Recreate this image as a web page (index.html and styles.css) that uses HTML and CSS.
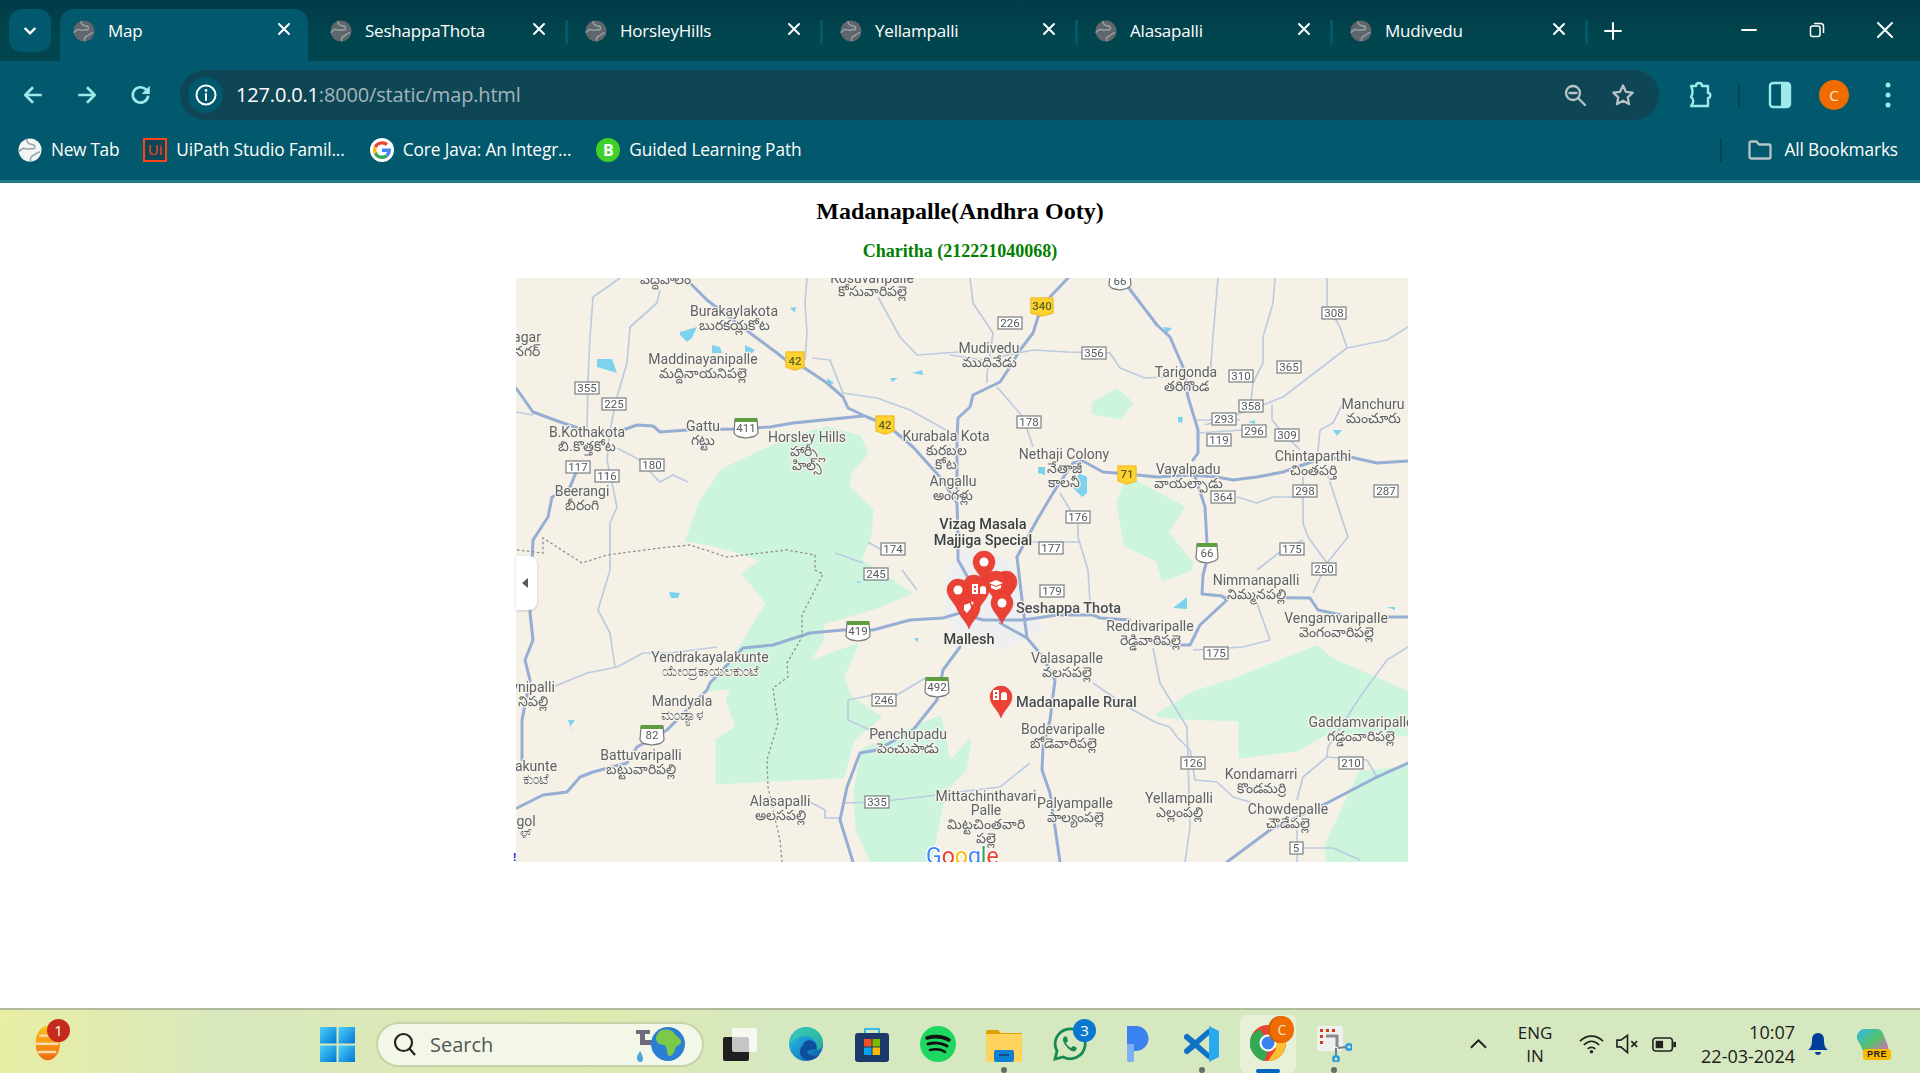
FILE: index.html
```html
<!DOCTYPE html>
<html lang="en">
<head>
<meta charset="utf-8">
<title>Map</title>
<link rel="stylesheet" href="styles.css">
</head>
<body>
<svg class="defs" aria-hidden="true">
  <symbol id="globe" viewBox="0 0 24 24"><circle cx="12" cy="12" r="11.5" fill="currentColor"/><path class="globe-land" d="M9 1c-1 3 1 4 3 5s5 0 5 3-4 1-6 2-5-2-7 0-3 2-3 3M13 23c-2-3 1-5 3-6s3-3 6-3" /></symbol>
  <symbol id="close" viewBox="0 0 14 14"><path class="stroke-white" d="M2 2l10 10M12 2L2 12"/></symbol>
  <symbol id="pin" viewBox="-12 -12 24 34" overflow="visible"><path d="M0 21C-2.500 13-11 8-11 0A11 11 0 1 1 11 0C11 8 2.500 13 0 21Z"/></symbol>
  <linearGradient id="win" x1="0" y1="0" x2="1" y2="1"><stop offset="0" stop-color="#4fd0fa"/><stop offset="1" stop-color="#0078d4"/></linearGradient>
  <linearGradient id="wx" x1="0" y1="0" x2="0" y2="1"><stop offset="0" stop-color="#fcc419"/><stop offset="1" stop-color="#f06a0f"/></linearGradient>
  <linearGradient id="edge" x1="0" y1="0" x2="1" y2="1"><stop offset="0" stop-color="#2fc5e8"/><stop offset=".6" stop-color="#1789c9"/><stop offset="1" stop-color="#0c4f9e"/></linearGradient>
  <linearGradient id="cop" x1="0" y1="0" x2="1" y2="1"><stop offset="0" stop-color="#2fb5f0"/><stop offset=".5" stop-color="#54c26a"/><stop offset="1" stop-color="#e45fc8"/></linearGradient>
</svg>

<header class="chrome">
  <div class="tabstrip">
    <button class="tab-menu"><svg class="ico12" viewBox="0 0 12 12"><path class="stroke-white" d="M2 4l4 4 4-4"/></svg></button>
    <div class="tabs">
      <div class="tab active"><svg class="fav"><use href="#globe"/></svg><span class="tab-title">Map</span><svg class="tab-x"><use href="#close"/></svg></div>
      <div class="tab sep"><svg class="fav"><use href="#globe"/></svg><span class="tab-title">SeshappaThota</span><svg class="tab-x"><use href="#close"/></svg></div>
      <div class="tab sep"><svg class="fav"><use href="#globe"/></svg><span class="tab-title">HorsleyHills</span><svg class="tab-x"><use href="#close"/></svg></div>
      <div class="tab sep"><svg class="fav"><use href="#globe"/></svg><span class="tab-title">Yellampalli</span><svg class="tab-x"><use href="#close"/></svg></div>
      <div class="tab sep"><svg class="fav"><use href="#globe"/></svg><span class="tab-title">Alasapalli</span><svg class="tab-x"><use href="#close"/></svg></div>
      <div class="tab sep"><svg class="fav"><use href="#globe"/></svg><span class="tab-title">Mudivedu</span><svg class="tab-x"><use href="#close"/></svg></div>
    </div>
    <svg class="plus" viewBox="0 0 18 18"><path class="stroke-white" d="M9 1v16M1 9h16"/></svg>
    <div class="winctl">
      <div class="winbtn"><svg viewBox="0 0 16 16"><path class="stroke-white" d="M1 8h14"/></svg></div>
      <div class="winbtn"><svg viewBox="0 0 16 16"><rect class="line-white" x="1.500" y="4" width="9.500" height="10.500" rx="2"/><path class="line-white" d="M5 1.500h6.500a3 3 0 0 1 3 3V11"/></svg></div>
      <div class="winbtn"><svg viewBox="0 0 16 16"><path class="stroke-white" d="M1 1l14 14M15 1L1 15"/></svg></div>
    </div>
  </div>

  <div class="toolbar">
    <div class="navbtn"><svg class="ico20" viewBox="0 0 20 20"><path class="stroke-teal" d="M18 10H3M10 3l-7 7 7 7"/></svg></div>
    <div class="navbtn"><svg class="ico20" viewBox="0 0 20 20"><path class="stroke-teal" d="M2 10h15M10 3l7 7-7 7"/></svg></div>
    <div class="navbtn"><svg class="ico20" viewBox="0 0 20 20"><path class="stroke-teal" d="M16.500 10.500a7 7 0 1 1-2-5.500l2 2"/><path class="fill-teal" d="M18 1.500V9h-7.500z"/></svg></div>
    <div class="omnibox">
      <div class="info"><svg class="ico22" viewBox="0 0 22 22"><circle class="line-white2" cx="11" cy="11" r="9.500"/><path class="stroke-white" d="M11 10v6"/><circle class="dot-white" cx="11" cy="6.500" r="1.400"/></svg></div>
      <div class="url"><span class="url-host">127.0.0.1</span><span class="url-path">:8000/static/map.html</span></div>
      <svg class="omni-zoom" viewBox="0 0 24 24"><circle class="stroke-grey" cx="10" cy="10" r="7"/><path class="stroke-grey" d="M6.500 10h7M15.500 15.500L22 22"/></svg>
      <svg class="omni-star" viewBox="0 0 24 24"><path class="stroke-grey" d="M12 2.500l2.900 6.300 6.800.8-5 4.700 1.300 6.800L12 17.700 6 21.100l1.300-6.800-5-4.700 6.800-.8z"/></svg>
    </div>
    <svg class="tool-ext" viewBox="0 0 24 28"><path class="stroke-teal" d="M3 5h5c0-4 6-4 6 0h6v7c3-1 3 5 0 5v8H3c3-3 3-7 0-9 2-3 2-7 0-11z"/></svg>
    <div class="tool-sep"></div>
    <svg class="tool-panel" viewBox="0 0 24 28"><rect class="stroke-teal" x="2" y="2" width="20" height="24" rx="3"/><rect class="fill-teal" x="13" y="2" width="9" height="24" rx="2"/></svg>
    <div class="avatar">C</div>
    <svg class="tool-dots" viewBox="0 0 6 28"><circle class="fill-teal" cx="3" cy="4" r="2.500"/><circle class="fill-teal" cx="3" cy="14" r="2.500"/><circle class="fill-teal" cx="3" cy="24" r="2.500"/></svg>
  </div>

  <div class="bookmarks">
    <div class="bm bm-newtab"><svg class="bm-ico globe-w"><use href="#globe"/></svg><span>New Tab</span></div>
    <div class="bm bm-ui"><span class="ui-logo">Ui</span><span>UiPath Studio Famil...</span></div>
    <div class="bm bm-g"><svg class="bm-ico" viewBox="0 0 24 24"><circle class="g-bg" cx="12" cy="12" r="12"/><path class="g-r" d="M12 6.500a5.500 5.500 0 0 1 3.700 1.400l2.300-2.300A9 9 0 0 0 4 8l2.700 2.100A5.500 5.500 0 0 1 12 6.500z"/><path class="g-y" d="M6.700 10.100L4 8a9 9 0 0 0 0 8l2.700-2.100a5.500 5.500 0 0 1 0-3.800z"/><path class="g-g" d="M12 17.500a5.500 5.500 0 0 1-5.300-3.600L4 16a9 9 0 0 0 14 2.700l-2.600-2a5.500 5.500 0 0 1-3.400.8z"/><path class="g-b" d="M21 12.400c0-.6 0-1.200-.2-1.900H12v3.600h5a4.300 4.300 0 0 1-1.600 2.600l2.600 2a9 9 0 0 0 3-6.300z"/></svg><span>Core Java: An Integr...</span></div>
    <div class="bm bm-b"><span class="b-logo">B</span><span>Guided Learning Path</span></div>
    <div class="bm-sep"></div>
    <div class="bm bm-all"><svg class="bm-folder" viewBox="0 0 24 20"><path class="stroke-grey" d="M1.500 17V3a1.500 1.500 0 0 1 1.500-1.500h5.500l2.500 3h10a1.500 1.500 0 0 1 1.500 1.500v11a1.500 1.500 0 0 1-1.500 1.500H3A1.500 1.500 0 0 1 1.500 17z"/></svg><span>All Bookmarks</span></div>
  </div>
</header>

<main class="page">
  <h2 class="title">Madanapalle(Andhra Ooty)</h2>
  <h3 class="subtitle">Charitha (212221040068)</h3>
  <div class="map">
    <svg class="map-svg" viewBox="516 278 892 584" width="892" height="584">
      <rect class="land" x="516" y="278" width="892" height="584"/>
      <g class="forest">
        <polygon points="722,470 743,460 793,437 827,428 860,437 867,453 850,473 848,487 872,510 870,537 860,560 910,593 877,607 823,623 822,640 808,663 857,645 843,677 850,697 880,717 853,740 843,777 770,780 717,783 717,740 737,727 727,700 733,687 710,690 743,643 767,603 743,573 763,560 723,547 687,540 700,503"/>
        <polygon points="863,750 940,717 950,763 970,740 965,770 945,790 930,862 872,862 857,830 855,790"/>
        <polygon points="1157,715 1193,693 1233,680 1283,660 1317,647 1333,660 1363,673 1408,693 1408,735 1327,733 1297,750 1240,757 1240,720 1180,718"/>
        <polygon points="1327,843 1360,773 1408,767 1408,862 1327,862"/>
        <polygon points="1118,503 1127,477 1183,507 1167,533 1192,563 1190,570 1163,580 1157,560 1125,545"/>
        <polygon points="1093,403 1117,390 1132,403 1120,418 1093,413"/>
      </g>
      <polygon class="town" points="945,575 965,545 1010,560 1030,610 1045,630 1000,650 960,640 945,615"/>
      <g class="water">
        <polygon points="680,332 697,327 692,338 687,342 680,335"/><polygon points="597,359 612,359 617,373 597,367"/><polygon points="712,345 720,347 722,353 712,353"/><polygon points="745,345 755,350 752,353 745,352"/><polygon points="790,308 796,307 795,313"/><polygon points="912,373 922,370 923,375"/><polygon points="890,378 898,378 892,382"/><polygon points="827,378 834,383 828,386"/><polygon points="1163,327 1172,328 1167,333"/><polygon points="1178,417 1183,417 1182,423 1178,422"/><polygon points="1038,467 1045,467 1045,475 1038,473"/><polygon points="1078,473 1087,477 1087,493 1082,497 1072,487 1078,482"/><polygon points="1333,430 1342,430 1337,436"/><polygon points="1248,422 1255,420 1255,424"/><polygon points="1173,608 1187,597 1187,609"/><polygon points="1387,607 1395,607 1395,610"/><polygon points="669,592 680,593 678,598 671,598"/><polygon points="568,720 575,720 570,727 573,734"/><polygon points="914,638 919,638 917,642"/><polygon points="856,581 863,582 858,583"/>
      </g>
      <g class="road-minor">
        <polyline points="620,278 593,297 590,337 588,380 587,430"/>
        <polyline points="660,290 657,303 630,327 627,363 617,397 610,430 607,460 617,507 610,523 610,570 598,610 610,633 615,667"/>
        <polyline points="553,687 587,673 617,667 643,653 670,653 717,647"/>
        <polyline points="970,278 973,303 993,333 987,373 987,383"/>
        <polyline points="950,355 983,360 1033,350 1067,352 1110,353 1120,368 1145,378 1163,377"/>
        <polyline points="1218,278 1213,337 1210,377"/>
        <polyline points="1275,278 1273,303 1263,337 1263,363 1253,383 1250,410"/>
        <polyline points="1327,278 1327,305 1340,327 1347,348 1283,397 1250,410 1205,425"/>
        <polyline points="1347,348 1387,340 1408,327"/>
        <polyline points="1272,405 1272,420 1283,433 1300,450"/>
        <polyline points="1343,403 1333,423 1320,430 1317,460"/>
        <polyline points="1303,477 1303,523 1308,537 1327,563"/>
        <polyline points="1327,473 1348,537 1327,563 1313,593"/>
        <polyline points="1060,493 1078,523 1078,537 1088,570 1090,603"/>
        <polyline points="1022,542 1080,542"/>
        <polyline points="997,387 1023,417 1033,447"/>
        <polyline points="1197,420 1240,420"/>
        <polyline points="1198,433 1243,430"/>
        <polyline points="1237,497 1257,503 1273,497 1303,497"/>
        <polyline points="1257,570 1280,552 1303,540"/>
        <polyline points="516,412 533,415"/>
        <polyline points="617,448 640,460 653,475 660,482 673,475 688,482"/>
        <polyline points="1093,683 1103,690 1133,710 1157,723 1170,727 1177,737 1190,750 1195,780 1217,782 1233,797 1250,802"/>
        <polyline points="1153,648 1160,683 1187,727 1190,827 1185,862"/>
        <polyline points="1257,603 1270,640 1243,647 1193,650"/>
        <polyline points="1297,800 1303,777 1327,757 1367,760 1377,777"/>
        <polyline points="1327,757 1328,747 1360,697 1387,660 1408,647"/>
        <polyline points="1297,830 1297,862"/>
        <polyline points="1300,848 1333,848 1360,860"/>
        <polyline points="950,793 1000,787 1030,763"/>
        <polyline points="843,803 877,802 937,795"/>
        <polyline points="810,802 825,810 825,818 840,818"/>
        <polyline points="848,700 848,720 877,733"/>
        <polyline points="848,700 873,695 897,695 927,677"/>
        <polyline points="902,570 917,590"/>
        <polyline points="835,553 863,563"/>
        <polyline points="868,542 887,553"/>
        <polyline points="807,278 805,303 807,333 805,360"/>
        <polyline points="812,358 830,360 835,373 843,393 877,398 910,410 955,435"/>
        <polyline points="878,297 900,337 917,355 958,352"/>
      </g>
      <g class="road-major">
        <polyline points="690,283 707,300 750,333 777,353 787,361 803,367 827,383 843,397 848,408 867,417 887,425 913,447 940,477 957,503 958,537 958,560 975,590"/>
        <polyline points="516,388 533,412 563,423 590,432 623,430 637,425 653,426 660,432 687,430 733,429 770,427 793,423 863,416"/>
        <polyline points="577,470 570,487 552,497 548,517 533,540 532,563 530,613 533,640 525,660 530,680 522,720 522,760"/>
        <polyline points="1068,278 1050,297 1038,317 1033,333 1020,350 1008,370 1000,382 973,395 970,407 958,418 957,437 957,500"/>
        <polyline points="1017,557 1037,520 1053,493 1073,463 1083,461 1103,472 1127,474 1157,477 1190,475 1217,477 1233,480 1257,477 1283,472 1317,460 1350,457 1377,463 1408,461"/>
        <polyline points="1128,287 1157,325 1170,337 1183,367 1188,397 1198,430 1198,453 1193,460"/>
        <polyline points="1193,470 1205,507 1207,543 1207,560 1203,575 1202,594 1222,596 1227,600 1200,625 1190,645 1170,645 1152,642"/>
        <polyline points="710,683 743,648 773,645 810,633 843,630 873,630 910,620 943,618 960,613 983,620 1023,620 1057,615 1093,615 1100,618 1130,620"/>
        <polyline points="710,683 707,690 667,730 637,747 627,763 593,772 580,777 567,792 543,795 517,808"/>
        <polyline points="1000,623 1027,638 1043,657 1055,680 1050,720 1043,747 1042,770 1050,793 1060,862"/>
        <polyline points="960,647 943,670 937,700 913,730 877,750 860,753 847,787 840,820 853,862"/>
        <polyline points="1408,763 1377,777 1327,803 1270,830 1227,862"/>
        <polyline points="1227,597 1310,598 1318,610 1350,617 1407,617"/>
        <polyline points="1017,557 1022,600 1027,638"/>
      </g>
      <polyline class="border" points="517,550 543,553 543,538 582,563 607,555 660,548 690,545 727,557 787,550 815,555 815,570 823,574 802,615 802,637 787,663 788,677 773,688 778,723 767,760 768,787 780,840 782,862"/>

      <g class="lbl">
        <text x="665" y="284">పెద్దపాలెం</text><text x="872" y="283">Kosuvaripalle</text><text x="872" y="296">కోసువారిపల్లె</text>
        <text x="734" y="316">Burakaylakota</text><text x="734" y="330">బురకయ్లకోట</text>
        <text x="703" y="364">Maddinayanipalle</text><text x="703" y="378">మద్దినాయనిపల్లె</text>
        <text x="587" y="437">B.Kothakota</text><text x="587" y="451">బి.కొత్తకోట</text>
        <text x="703" y="431">Gattu</text><text x="703" y="445">గట్టు</text>
        <text x="807" y="442">Horsley Hills</text><text x="807" y="456">హార్స్లీ</text><text x="807" y="470">హిల్స్</text>
        <text x="582" y="496">Beerangi</text><text x="582" y="510">బీరంగి</text>
        <text x="946" y="441">Kurabala Kota</text><text x="946" y="455">కురబల</text><text x="946" y="469">కోట</text>
        <text x="953" y="486">Angallu</text><text x="953" y="500">అంగళ్లు</text>
        <text x="989" y="353">Mudivedu</text><text x="989" y="367">ముదివేడు</text>
        <text x="1186" y="377">Tarigonda</text><text x="1186" y="391">తరిగొండ</text>
        <text x="1064" y="459">Nethaji Colony</text><text x="1064" y="473">నేతాజీ</text><text x="1064" y="487">కాలనీ</text>
        <text x="1188" y="474">Vayalpadu</text><text x="1188" y="488">వాయల్పాడు</text>
        <text x="1313" y="461">Chintaparthi</text><text x="1313" y="475">చింతపర్తి</text>
        <text x="1373" y="409">Manchuru</text><text x="1373" y="423">మంచూరు</text>
        <text x="1256" y="585">Nimmanapalli</text><text x="1256" y="599">నిమ్మనపల్లి</text>
        <text x="1336" y="623">Vengamvaripalle</text><text x="1336" y="637">వెంగంవారిపల్లె</text>
        <text x="1150" y="631">Reddivaripalle</text><text x="1150" y="645">రెడ్డివారిపల్లె</text>
        <text x="1067" y="663">Valasapalle</text><text x="1067" y="677">వలసపల్లె</text>
        <text x="1063" y="734">Bodevaripalle</text><text x="1063" y="748">బోడెవారిపల్లె</text>
        <text x="1361" y="727">Gaddamvaripalle</text><text x="1361" y="741">గడ్డంవారిపల్లె</text>
        <text x="1261" y="779">Kondamarri</text><text x="1261" y="793">కొండమర్రి</text>
        <text x="1288" y="814">Chowdepalle</text><text x="1288" y="828">చౌడేపల్లె</text>
        <text x="1179" y="803">Yellampalli</text><text x="1179" y="817">ఎల్లంపల్లి</text>
        <text x="1075" y="808">Palyampalle</text><text x="1075" y="822">పాల్యంపల్లె</text>
        <text x="986" y="801">Mittachinthavari</text><text x="986" y="815">Palle</text><text x="986" y="829">మిట్టచింతవారి</text><text x="986" y="843">పల్లె</text>
        <text x="780" y="806">Alasapalli</text><text x="780" y="820">అలసపల్లి</text>
        <text x="908" y="739">Penchupadu</text><text x="908" y="753">పెంచుపాడు</text>
        <text x="641" y="760">Battuvaripalli</text><text x="641" y="774">బట్టువారిపల్లి</text>
        <text x="682" y="706">Mandyala</text><text x="682" y="720">ಮಂಡ್ಯಾಳ</text>
        <text x="710" y="662">Yendrakayalakunte</text><text x="710" y="676">ಯೇಂದ್ರಕಾಯಲಕುಂಟೆ</text>
        <text x="527" y="342">agar</text><text x="527" y="356">నగర్</text>
        <text x="533" y="692">vnipalli</text><text x="533" y="706">నిపల్లి</text>
        <text x="536" y="771">akunte</text><text x="536" y="784">ಕುಂಟೆ</text>
        <text x="526" y="826">gol</text><text x="526" y="838">ಳ್</text>
      </g>
      <g class="lbl lbl-strong">
        <text x="983" y="529">Vizag Masala</text><text x="983" y="545">Majjiga Special</text>
        <text x="969" y="644">Mallesh</text>
      </g>
      <g class="lbl lbl-start lbl-strong2">
        <text x="1016" y="613">Seshappa Thota</text>
        <text x="1016" y="707">Madanapalle Rural</text>
      </g>

      <g class="sh">
        <rect x="575" y="382" width="24" height="12"/><text x="587" y="392">355</text>
        <rect x="602" y="398" width="24" height="12"/><text x="614" y="408">225</text>
        <rect x="566" y="461" width="24" height="12"/><text x="578" y="471">117</text>
        <rect x="595" y="470" width="24" height="12"/><text x="607" y="480">116</text>
        <rect x="640" y="459" width="24" height="12"/><text x="652" y="469">180</text>
        <rect x="881" y="543" width="24" height="12"/><text x="893" y="553">174</text>
        <rect x="998" y="317" width="24" height="12"/><text x="1010" y="327">226</text>
        <rect x="1082" y="347" width="24" height="12"/><text x="1094" y="357">356</text>
        <rect x="1017" y="416" width="24" height="12"/><text x="1029" y="426">178</text>
        <rect x="1066" y="511" width="24" height="12"/><text x="1078" y="521">176</text>
        <rect x="1039" y="542" width="24" height="12"/><text x="1051" y="552">177</text>
        <rect x="1322" y="307" width="24" height="12"/><text x="1334" y="317">308</text>
        <rect x="1229" y="370" width="24" height="12"/><text x="1241" y="380">310</text>
        <rect x="1277" y="361" width="24" height="12"/><text x="1289" y="371">365</text>
        <rect x="1239" y="400" width="24" height="12"/><text x="1251" y="410">358</text>
        <rect x="1212" y="413" width="24" height="12"/><text x="1224" y="423">293</text>
        <rect x="1242" y="425" width="24" height="12"/><text x="1254" y="435">296</text>
        <rect x="1275" y="429" width="24" height="12"/><text x="1287" y="439">309</text>
        <rect x="1207" y="434" width="24" height="12"/><text x="1219" y="444">119</text>
        <rect x="1211" y="491" width="24" height="12"/><text x="1223" y="501">364</text>
        <rect x="1293" y="485" width="24" height="12"/><text x="1305" y="495">298</text>
        <rect x="1374" y="485" width="24" height="12"/><text x="1386" y="495">287</text>
        <rect x="1280" y="543" width="24" height="12"/><text x="1292" y="553">175</text>
        <rect x="1312" y="563" width="24" height="12"/><text x="1324" y="573">250</text>
        <rect x="1040" y="585" width="24" height="12"/><text x="1052" y="595">179</text>
        <rect x="1204" y="647" width="24" height="12"/><text x="1216" y="657">175</text>
        <rect x="1181" y="757" width="24" height="12"/><text x="1193" y="767">126</text>
        <rect x="1339" y="757" width="24" height="12"/><text x="1351" y="767">210</text>
        <rect x="1290" y="842" width="13" height="12"/><text x="1296" y="852">5</text>
        <rect x="864" y="568" width="24" height="12"/><text x="876" y="578">245</text>
        <rect x="872" y="694" width="24" height="12"/><text x="884" y="704">246</text>
        <rect x="865" y="796" width="24" height="12"/><text x="877" y="806">335</text>
      </g>
      <g class="sh-y">
        <path d="M786 352h18v15l-9 3-9-3z"/><text x="795" y="365">42</text>
        <path d="M876 416h18v15l-9 3-9-3z"/><text x="885" y="429">42</text>
        <path d="M1031 298h22v15l-11 3-11-3z"/><text x="1042" y="310">340</text>
        <path d="M1118 466h18v15l-9 3-9-3z"/><text x="1127" y="478">71</text>
      </g>
      <g class="sh-us">
        <path class="us-b" d="M735 419h22l1 14c-2 4-6 4-12 5-6-1-10-1-12-5z"/><rect class="us-g" x="735" y="418" width="22" height="4"/><text x="746" y="432">411</text>
        <path class="us-b" d="M847 622h22l1 14c-2 4-6 4-12 5-6-1-10-1-12-5z"/><rect class="us-g" x="847" y="621" width="22" height="4"/><text x="858" y="635">419</text>
        <path class="us-b" d="M926 678h22l1 14c-2 4-6 4-12 5-6-1-10-1-12-5z"/><rect class="us-g" x="926" y="677" width="22" height="4"/><text x="937" y="691">492</text>
        <path class="us-b" d="M641 726h22l1 14c-2 4-6 4-12 5-6-1-10-1-12-5z"/><rect class="us-g" x="641" y="725" width="22" height="4"/><text x="652" y="739">82</text>
        <path class="us-b" d="M1197 544h20l1 14c-2 4-6 4-11 5-6-1-9-1-11-5z"/><rect class="us-g" x="1197" y="543" width="20" height="4"/><text x="1207" y="557">66</text>
        <path class="us-b" d="M1110 276h20l1 9c-2 4-6 4-11 5-6-1-9-1-11-5z"/><text x="1120" y="285">66</text>
      </g>

      <g class="pins">
        <use href="#pin" x="994" y="570" width="24" height="34"/>
        <use href="#pin" x="990" y="572" width="24" height="34"/>
        <use href="#pin" x="972" y="550" width="24" height="34"/>
        <use href="#pin" x="984" y="570" width="24" height="34"/>
        <use href="#pin" x="946" y="578" width="24" height="34"/>
        <use href="#pin" x="962" y="574" width="24" height="34"/>
        <use href="#pin" x="966" y="578" width="24" height="34"/>
        <use href="#pin" x="957" y="596" width="24" height="34"/>
        <use href="#pin" x="990" y="591" width="24" height="34"/>
        <use href="#pin" x="989" y="685" width="24" height="34"/>
        <circle class="pin-dot" cx="984" cy="562" r="4.500"/>
        <circle class="pin-dot" cx="958" cy="590" r="4.500"/>
        <circle class="pin-dot" cx="1002" cy="603" r="4.500"/>
        <path class="pin-glyph" d="M989 583l7-3 7 3-7 3zM991 585v3l5 2 5-2v-3l-5 2z"/>
        <path class="pin-glyph" fill-rule="evenodd" d="M972 584h6v10h-6zM974 586v2h2v-2zM974 590v2h2v-2zM980 589a3 3 0 0 1 6 0v5h-6zM993 690h6v10h-6zM995 692v2h2v-2zM995 696v2h2v-2zM1001 695a3 3 0 0 1 6 0v5h-6z"/>
        <path class="pin-glyph" d="M964 605l6-2 1 5-4 5-3-3zM971 601l3 2-2 2z"/>
      </g>

      <text class="glogo" x="926" y="864"><tspan class="gb">G</tspan><tspan class="gr">o</tspan><tspan class="gy">o</tspan><tspan class="gb">g</tspan><tspan class="gg">l</tspan><tspan class="gr">e</tspan></text>
    </svg>
    <div class="map-toggle"><span class="map-arrow"></span></div>
    <a class="map-mark">!</a>
  </div>
</main>

<footer class="taskbar">
  <div class="tb-weather">
    <svg class="wx-ico" viewBox="0 0 32 44"><ellipse cx="17" cy="22" rx="15" ry="21" fill="url(#wx)"/><path class="wx-lines" d="M8 13h14M1 23h28M6 33h20"/></svg>
    <span class="wx-badge">1</span>
  </div>
  <div class="tb-slot tb-win"><svg class="win-ico" viewBox="0 0 35 35"><rect x="0" y="0" width="16.500" height="16.500" fill="url(#win)"/><rect x="18.500" y="0" width="16.500" height="16.500" fill="url(#win)"/><rect x="0" y="18.500" width="16.500" height="16.500" fill="url(#win)"/><rect x="18.500" y="18.500" width="16.500" height="16.500" fill="url(#win)"/></svg></div>
  <div class="tb-search">
    <svg class="s-ico" viewBox="0 0 24 24"><circle cx="10.500" cy="10.500" r="8.500"/><path d="M16 16l6 7"/></svg>
    <span class="s-text">Search</span>
    <svg class="s-art" viewBox="0 0 60 40"><path class="tap" d="M6 6h14v4h-5v6h14c4 0 6 3 6 8h-7c0-2-1-3-3-3H10V10H6z"/><path class="drop" d="M10 27c-3 5-4 7-2 10 2 2 5 1 5-2 0-2-1-5-3-8z"/><circle class="earth" cx="38" cy="20" r="17"/><path class="land2" d="M30 7c6-3 12-1 14 2 2 4 8 5 7 10-2 3-5 2-6 6-1 5-5 9-7 6-2-4 0-8-4-10-5 0-8-3-8-7 0-3 2-5 4-7z"/></svg>
  </div>
  <div class="tb-slot"><svg class="tb-ico" viewBox="0 0 36 36"><rect class="tv-b" x="1" y="11" width="26" height="24" rx="2"/><rect class="tv-w" x="10" y="2" width="25" height="24" rx="2"/></svg></div>
  <div class="tb-slot"><svg class="tb-ico" viewBox="0 0 36 36"><circle cx="18" cy="18" r="17" fill="url(#edge)"/><path class="edge-w" d="M15 19c1-5 7-6 11-3 3 2 3 5 2 7-3 1-7 0-9 3 3 4 9 6 13 2-2 3-6 6-11 6-6 0-9-4-9-8 0-3 1-5 3-7z"/><path class="edge-g" d="M18 1c9 0 17 7 17 15 0 5-3 8-6 8 1-8-5-14-12-14-6 0-11 3-15 9C3 9 9 1 18 1z"/></svg></div>
  <div class="tb-slot"><svg class="tb-ico" viewBox="0 0 36 36"><path class="bag-h" d="M11 8V3h14v5"/><rect class="bag" x="1" y="7" width="34" height="29" rx="3"/><rect class="ms-r" x="10" y="13" width="7.500" height="7.500"/><rect class="ms-g" x="18.500" y="13" width="7.500" height="7.500"/><rect class="ms-b" x="10" y="21.500" width="7.500" height="7.500"/><rect class="ms-y" x="18.500" y="21.500" width="7.500" height="7.500"/></svg></div>
  <div class="tb-slot"><svg class="tb-ico" viewBox="0 0 36 36"><circle class="sp" cx="18" cy="18" r="18"/><path class="sp-a a1" d="M7 12c7-2 15-2 22 2"/><path class="sp-a a2" d="M8 18c6-2 14-1 19 2"/><path class="sp-a a3" d="M10 24c5-1 11-1 15 2"/></svg></div>
  <div class="tb-slot tb-run"><svg class="tb-ico" viewBox="0 0 36 36"><path class="fold-b" d="M0 6a2 2 0 0 1 2-2h10l3 3h21v6H0z"/><path class="fold-f" d="M0 8h36v28H0z"/><rect class="fold-blue" x="8" y="24" width="20" height="12" rx="2"/><path class="fold-d" d="M13 29h10"/></svg></div>
  <div class="tb-slot"><svg class="tb-ico" viewBox="0 0 36 36"><path class="wa" d="M3 33l2-8A15 15 0 1 1 11 31z"/><path class="wa-h" d="M12 11c-2 2-1 5 2 9s6 6 9 5c2-1 2-3 1-4l-3-1-2 2c-2-1-4-3-5-5l2-2-1-4c-1-1-2-1-3 0z"/></svg><span class="wa-badge">3</span></div>
  <div class="tb-slot"><svg class="tb-ico" viewBox="0 0 36 36"><path class="p1" d="M9 0h9a12 12 0 0 1 0 25h-2v8a3 3 0 0 1-3 3h-1a3 3 0 0 1-3-3z"/><path class="p2" d="M9 18h7v15a3 3 0 0 1-3 3h-1a3 3 0 0 1-3-3z"/></svg></div>
  <div class="tb-slot tb-run"><svg class="tb-ico" viewBox="0 0 36 36"><path class="vs-arm" d="M3 11l22 19M3 25L25 6"/><path class="vs-panel" d="M25 0l10 5v26l-10 5z"/><path class="vs-notch" d="M25 9l-10 9 10 9z"/></svg></div>
  <div class="tb-slot tb-active"><svg class="tb-ico" viewBox="0 0 36 36"><circle class="cr-r" cx="18" cy="18" r="18"/><path class="cr-g" d="M18 18L2.400 27A18 18 0 0 1 2.400 9L10 4z"/><path class="cr-g" d="M2 26L10 18l8 8-4 10A18 18 0 0 1 2 26z"/><path class="cr-y" d="M18 36A18 18 0 0 0 34 10H18l8 14z"/><circle class="cr-w" cx="18" cy="18" r="8.500"/><circle class="cr-b" cx="18" cy="18" r="6.500"/></svg><span class="cr-badge">C</span></div>
  <div class="tb-slot tb-run"><svg class="tb-ico" viewBox="0 0 36 36"><rect class="sn-bg" x="1" y="0" width="26" height="25" rx="3"/><path class="sn-red" d="M4 3h3v3H4zM10 3h3v3h-3zM16 3h3v3h-3zM4 9h3v3H4zM4 15h3v3H4z"/><path class="sn-grey" d="M10 10h11v11"/><path class="sn-cut" d="M20 22l0 7M22 22l8-1"/><circle class="sn-c" cx="33" cy="21" r="2.800"/><circle class="sn-c" cx="20" cy="33" r="2.800"/></svg></div>
  <div class="tray">
    <svg class="tr-chev" viewBox="0 0 18 10"><path d="M1 9l8-8 8 8"/></svg>
    <div class="tr-lang"><span>ENG</span><span>IN</span></div>
    <svg class="tr-wifi" viewBox="0 0 26 20"><path d="M1 7c7-7 17-7 24 0M5 11c5-5 11-5 16 0M9 15c2-2 6-2 8 0"/><circle cx="13" cy="18" r="1.800"/></svg>
    <svg class="tr-spk" viewBox="0 0 24 20"><path d="M1 6v7h4l7 6V1L5 6z"/><path d="M16 7l6 6M22 7l-6 6"/></svg>
    <svg class="tr-bat" viewBox="0 0 26 16"><rect x="1" y="1" width="21" height="14" rx="3"/><rect class="bat-l" x="4" y="4" width="8" height="8"/><path class="bat-l" d="M23 5h2a1 1 0 0 1 1 1v4a1 1 0 0 1-1 1h-2z"/></svg>
    <div class="tr-clock"><span>10:07</span><span>22-03-2024</span></div>
    <svg class="tr-bell" viewBox="0 0 20 24"><path d="M10 1c-4 0-6 3-6 7 0 5-1 8-4 10h20c-3-2-4-5-4-10 0-4-2-7-6-7z"/><path d="M7 20h6c0 4-6 4-6 0z"/></svg>
    <div class="tr-cop">
      <svg viewBox="0 0 36 28"><path d="M9 3h12c4 0 6 3 7 7l4 10c1 4-1 7-5 7H12c-4 0-6-3-7-7L1 13C0 8 4 3 9 3z" fill="url(#cop)"/></svg>
      <span>PRE</span>
    </div>
  </div>
</footer>
</body>
</html>
```
FILE: styles.css
```css
* { box-sizing: border-box; }
html, body { margin: 0; padding: 0; height: 100%; }
body { width: 1920px; height: 1073px; overflow: hidden; display: flex; flex-direction: column; background: #fff; font-family: "Open Sans", "Noto Sans", sans-serif; }
.defs { display: block; width: 0; height: 0; flex: none; }
svg { display: block; flex: none; }

/* Shared icon strokes */
.stroke-white { fill: none; stroke: #fff; stroke-width: 2; stroke-linecap: round; }
.line-white { fill: none; stroke: #fff; stroke-width: 1.5; }
.line-white2 { fill: none; stroke: #fff; stroke-width: 2; }
.dot-white { fill: #fff; }
.stroke-teal { fill: none; stroke: #9ee9e9; stroke-width: 2.4; stroke-linejoin: round; }
.fill-teal { fill: #9ee9e9; stroke: none; }
.stroke-grey { fill: none; stroke: #b7c3c6; stroke-width: 2.300; stroke-linejoin: round; stroke-linecap: round; }
.ico12 { width: 14px; height: 14px; }
.ico20 { width: 22px; height: 22px; }
.ico22 { width: 22px; height: 22px; }

/* Tab strip */
.chrome { flex: none; background: #02586c; border-bottom: 3px solid #1c7b86; color: #fff; }
.tabstrip { height: 61px; display: flex; align-items: flex-start; background: linear-gradient(#023a48, #01464f 60%, #01454f); padding-left: 9px; }
.tab-menu { width: 42px; height: 43px; margin-top: 9px; border: 0; padding: 0; border-radius: 13px; background: #02586c; display: flex; align-items: center; justify-content: center; }
.tabs { display: flex; margin-left: 6px; }
.tab { position: relative; width: 255px; height: 52px; margin-top: 9px; padding: 0 0 9px 18px; display: flex; align-items: center; }
.tab:first-child { padding-left: 16px; }
.tab.active::before { content: ""; position: absolute; left: 3px; right: 4px; top: 0; bottom: 0; background: #02586c; border-radius: 14px 14px 0 0; }
.tab.active > * { position: relative; }
.tab.sep::after { content: ""; position: absolute; right: -1px; top: 11px; width: 3px; height: 24px; background: #02586c; }
.fav { width: 22px; height: 24px; color: #5f666c; }
.globe-land { fill: none; stroke: #98a3a8; stroke-width: 1.600; }
.tab-title { margin-left: 13px; font-size: 17px; line-height: 24px; color: #fff; letter-spacing: -.2px; flex: 1; white-space: nowrap; }
.tab-x { width: 14px; height: 14px; margin-right: 21px; margin-top: -3px; }
.plus { width: 18px; height: 18px; margin: 22px 0 0 17px; }
.winctl { margin-left: auto; padding-right: 1px; display: flex; }
.winbtn { width: 68px; height: 52px; display: flex; align-items: center; justify-content: center; padding-bottom: 0; }
.winbtn svg { width: 16px; height: 16px; margin-top: 8px; }

/* Toolbar */
.toolbar { height: 70px; padding: 9px 0 11px 6px; display: flex; align-items: center; background: #02586c; border-radius: 14px 14px 0 0; margin-top: 0; }
.navbtn { width: 54px; display: flex; justify-content: center; }
.omnibox { width: 1479px; height: 50px; margin-left: 12px; border-radius: 25px; background: #0e4655; display: flex; align-items: center; padding: 0 24px 0 8px; }
.info { width: 35px; height: 36px; border-radius: 18px; background: #02586c; display: flex; align-items: center; justify-content: center; }
.url { margin-left: 13px; padding-bottom: 1px; font-size: 20px; letter-spacing: -.17px; white-space: nowrap; }
.url-host { color: #fff; }
.url-path { color: #a3b5ba; }
.omni-zoom { width: 24px; height: 24px; margin-left: auto; }
.omni-star { width: 24px; height: 24px; margin-left: 24px; }
.tool-ext { width: 24px; height: 28px; margin-left: 29px; }
.tool-sep { width: 2px; height: 24px; margin-left: 26px; background: #024553; }
.tool-panel { width: 24px; height: 28px; margin-left: 28px; }
.avatar { width: 30px; height: 30px; margin-left: 27px; border-radius: 50%; background: #f06c00; color: #ffe9d6; font-size: 15px; line-height: 30px; text-align: center; }
.tool-dots { width: 6px; height: 28px; margin-left: 36px; }

/* Bookmarks */
.bookmarks { height: 49px; padding-bottom: 12px; display: flex; align-items: center; background: #02586c; font-size: 17.300px; letter-spacing: -.12px; color: #fff; position: relative; }
.bm { display: flex; align-items: center; white-space: nowrap; }
.bm-ico { width: 24px; height: 24px; }
.bm > span:last-child { margin-left: 9px; }
.bm-newtab { margin-left: 18px; letter-spacing: -.3px; }
.bm-ui { margin-left: 24px; }
.bm-g { margin-left: 25px; }
.bm-b { margin-left: 25px; }
.globe-w { color: #f4f6f6; }
.globe-w .globe-land { stroke: #02586c; }
.ui-logo { width: 24px; height: 24px; border: 2px solid #fa4616; color: #fa4616; font-size: 15px; line-height: 19px; text-align: center; background: #0e4655; letter-spacing: 0; }
.b-logo { width: 24px; height: 24px; border-radius: 50%; background: #3fd12a; color: #fff; font-weight: 700; font-size: 16px; line-height: 24px; text-align: center; letter-spacing: 0; }
.g-bg { fill: #fff; }
.g-r { fill: #ea4335; }
.g-y { fill: #fbbc05; }
.g-g { fill: #34a853; }
.g-b { fill: #4285f4; }
.bm-sep { width: 2px; height: 24px; margin-left: auto; background: #024553; }
.bm-all { margin-left: 26px; margin-right: 22px; }
.bm-folder { width: 24px; height: 20px; }
.bm-all > span:last-child { margin-left: 12px; }

/* Page */
.page { flex: 1; min-height: 0; background: #fff; }
.title { margin: 15px 0 0; font: 700 24px/27px "Liberation Serif", serif; text-align: center; color: #000; }
.subtitle { margin: 16px 0 0; font: 700 18px/21px "Liberation Serif", serif; text-align: center; color: #008000; }
.map { position: relative; width: 892px; height: 584px; margin: 16px 0 0 516px; }
.map-svg { overflow: hidden; filter: blur(.55px); }
.land { fill: #f5f1e6; }
.forest polygon { fill: #cdf5de; stroke: #cdf5de; stroke-width: 3; stroke-linejoin: round; }
.town { fill: #eeeff0; }
.water polygon { fill: #7dd3ee; }
.road-minor polyline { fill: none; stroke: #bccbe0; stroke-width: 1.700; stroke-linejoin: round; }
.road-major polyline { fill: none; stroke: #96add4; stroke-width: 3; stroke-linejoin: round; stroke-linecap: round; }
.border { fill: none; stroke: #8f8f8a; stroke-width: 1.300; stroke-dasharray: 2.500 2.500; }
.lbl text { font: 400 14px "Roboto", "DejaVu Sans", sans-serif; text-anchor: middle; fill: #5f6266; stroke: #f7f4ec; stroke-width: 2.500px; paint-order: stroke; stroke-linejoin: round; }
.lbl-strong text { font-weight: 500; font-size: 14.500px; fill: #3c4043; }
.lbl-start text { text-anchor: start; font-weight: 500; font-size: 14.500px; fill: #4a4e52; }
.sh rect { fill: #fff; stroke: #7b7f80; stroke-width: 1.200; }
.sh text { font: 400 11.500px "Roboto", sans-serif; text-anchor: middle; fill: #55595c; }
.sh-y path { fill: #fdd231; stroke: #f2c230; stroke-width: 1.500; stroke-linejoin: round; }
.sh-y text { font: 500 11.500px "Roboto", sans-serif; text-anchor: middle; fill: #5c6420; }
.us-b { fill: #fff; stroke: #77797a; stroke-width: 1.200; }
.us-g { fill: #5e9e3e; }
.sh-us text { font: 400 11.500px "Roboto", sans-serif; text-anchor: middle; fill: #55595c; }
.pins use { fill: #ea4335; stroke: #d9352a; stroke-width: .5; }
.pin-dot { fill: #fff; }
.pin-glyph { fill: #fff; }
.glogo { font: 400 23px "Roboto", "Liberation Sans", sans-serif; stroke: #fff; stroke-width: 2.500px; paint-order: stroke; }
.gb { fill: #4285f4; }
.gr { fill: #ea4335; }
.gy { fill: #fbbc05; }
.gg { fill: #34a853; }
.map-toggle { position: absolute; left: 0; top: 278px; width: 21px; height: 54px; background: #fff; border-radius: 0 8px 8px 0; box-shadow: 0 1px 3px rgba(0,0,0,.18); display: flex; align-items: center; justify-content: center; }
.map-arrow { width: 0; height: 0; border: 5px solid transparent; border-left-width: 0; border-right: 6px solid #55595c; margin-right: 4px; }
.map-mark { position: absolute; left: -3px; bottom: -2px; font: 700 10px/12px "Liberation Sans", sans-serif; color: #0000ee; }

/* Taskbar */
.taskbar { flex: none; height: 65px; padding-top: 5px; display: flex; align-items: center; border-top: 2px solid #b3bb9f; background: linear-gradient(90deg, #e9eea4 0, #d8e8bd 220px, #dfeab0 600px, #d6e8bf 760px, #d6e8bf 100%); }
.tb-weather { position: relative; width: 304px; height: 100%; flex: none; }
.wx-ico { position: absolute; left: 32px; top: 10px; width: 30px; height: 36px; }
.wx-lines { fill: none; stroke: #f6dca8; stroke-width: 3; stroke-linecap: round; }
.wx-badge { position: absolute; left: 47px; top: 4px; width: 23px; height: 23px; border-radius: 50%; background: #c42b1c; color: #fff; font-size: 15px; line-height: 23px; text-align: center; }
.tb-slot { position: relative; width: 66px; height: 100%; flex: none; display: flex; align-items: center; justify-content: center; }
.tb-run::after { content: ""; position: absolute; left: 30px; bottom: 0; width: 6px; height: 6px; border-radius: 50%; background: #666b63; }
.win-ico { width: 35px; height: 35px; }
.tb-search { width: 328px; height: 45px; margin: 0 3px 0 6px; flex: none; display: flex; align-items: center; padding-left: 15px; border-radius: 23px; background: #f2f7e7; border: 2px solid #c4d3a8; }
.s-ico { width: 24px; height: 24px; }
.s-ico circle, .s-ico path { fill: none; stroke: #222; stroke-width: 2.200; }
.s-text { margin-left: 13px; font-size: 20px; color: #555; flex: 1; }
.s-art { width: 60px; height: 40px; margin-right: 12px; }
.tap { fill: #6f6a7c; }
.drop { fill: #4aa5e0; }
.earth { fill: #2a7fd5; }
.land2 { fill: #7cc94a; }
.tb-ico { width: 36px; height: 36px; }
.tv-b { fill: #1f1f1f; }
.tv-w { fill: #fff; fill-opacity: .75; }
.edge-w { fill: #0d4f9c; }
.edge-g { fill: #3ccf9a; fill-opacity: .65; }
.bag { fill: #1b3a6b; }
.bag-h { fill: none; stroke: #3dbbe8; stroke-width: 2; }
.ms-r { fill: #f25022; }
.ms-g { fill: #7fba00; }
.ms-b { fill: #00a4ef; }
.ms-y { fill: #ffb900; }
.sp { fill: #1ed760; }
.sp-a { fill: none; stroke: #111; stroke-linecap: round; }
.a1 { stroke-width: 3.500; }
.a2 { stroke-width: 3; }
.a3 { stroke-width: 2.500; }
.fold-b { fill: #e0a100; }
.fold-f { fill: #ffd35c; }
.fold-blue { fill: #0f7fd6; }
.fold-d { stroke: #0b4f8f; stroke-width: 2; }
.wa { fill: none; stroke: #158a52; stroke-width: 2.800; }
.wa-h { fill: #158a52; }
.wa-badge { position: absolute; left: 36px; top: 4px; width: 23px; height: 23px; border-radius: 50%; background: #0b78d0; color: #fff; font-size: 15px; line-height: 23px; text-align: center; }
.p1 { fill: #3b82f0; }
.p2 { fill: #7fb0f5; }
.vs-arm { fill: none; stroke: #0f72c4; stroke-width: 6; stroke-linecap: round; }
.vs-panel { fill: #29a9f1; }
.vs-notch { fill: #d6e8bf; }
.tb-active { width: 56px; margin: 0 5px; background: rgba(255,255,255,.4); border-radius: 6px; }
.tb-active::after { content: ""; position: absolute; left: 16px; bottom: 0; width: 24px; height: 4px; border-radius: 2px; background: #0067c0; }
.tb-active .tb-ico { margin-top: -2px; }
.cr-r { fill: #ea4335; }
.cr-g { fill: #34a853; }
.cr-y { fill: #fbc02d; }
.cr-w { fill: #fff; }
.cr-b { fill: #3b82f0; }
.cr-badge { position: absolute; left: 30px; top: 1px; width: 24px; height: 27px; border-radius: 50%; background: #ee6c00; color: #ffe2c6; font-size: 14px; line-height: 27px; text-align: center; box-shadow: -2px 0 0 #c95b00; }
.sn-bg { fill: #eef0ef; }
.sn-red { fill: #d13b1a; }
.sn-grey { fill: none; stroke: #8a8a8a; stroke-width: 3; }
.sn-cut { fill: none; stroke: #6f7d86; stroke-width: 2; }
.sn-c { fill: none; stroke: #2e9be0; stroke-width: 2.400; }
.tray { flex: 1; height: 100%; display: flex; align-items: center; color: #1c1c1c; }
.tr-chev { width: 17px; height: 10px; margin-left: 103px; }
.tr-chev path { fill: none; stroke: #222; stroke-width: 2; }
.tr-lang { width: 50px; margin-left: 23px; display: flex; flex-direction: column; align-items: center; font-size: 17px; line-height: 23px; }
.tr-wifi { width: 25px; height: 20px; margin-left: 19px; }
.tr-wifi path, .tr-spk path, .tr-bat rect { fill: none; stroke: #222; stroke-width: 1.700; }
.tr-wifi circle, .tr-bat .bat-l { fill: #222; stroke: none; }
.tr-spk { width: 23px; height: 20px; margin-left: 12px; }
.tr-bat { width: 24px; height: 15px; margin-left: 13px; }
.tr-clock { width: 108px; margin-left: 11px; display: flex; flex-direction: column; align-items: flex-end; font-size: 18px; line-height: 24px; }
.tr-bell { width: 20px; height: 24px; margin-left: 13px; }
.tr-bell path { fill: #003e9c; }
.tr-cop { position: relative; width: 36px; height: 36px; margin-left: 28px; }
.tr-cop svg { width: 36px; height: 28px; }
.tr-cop span { position: absolute; left: 7px; top: 23px; width: 28px; height: 11px; border-radius: 3px; background: #fbb900; color: #1c1c1c; font: 700 9px/11px "Liberation Sans", sans-serif; text-align: center; letter-spacing: .5px; }
```
